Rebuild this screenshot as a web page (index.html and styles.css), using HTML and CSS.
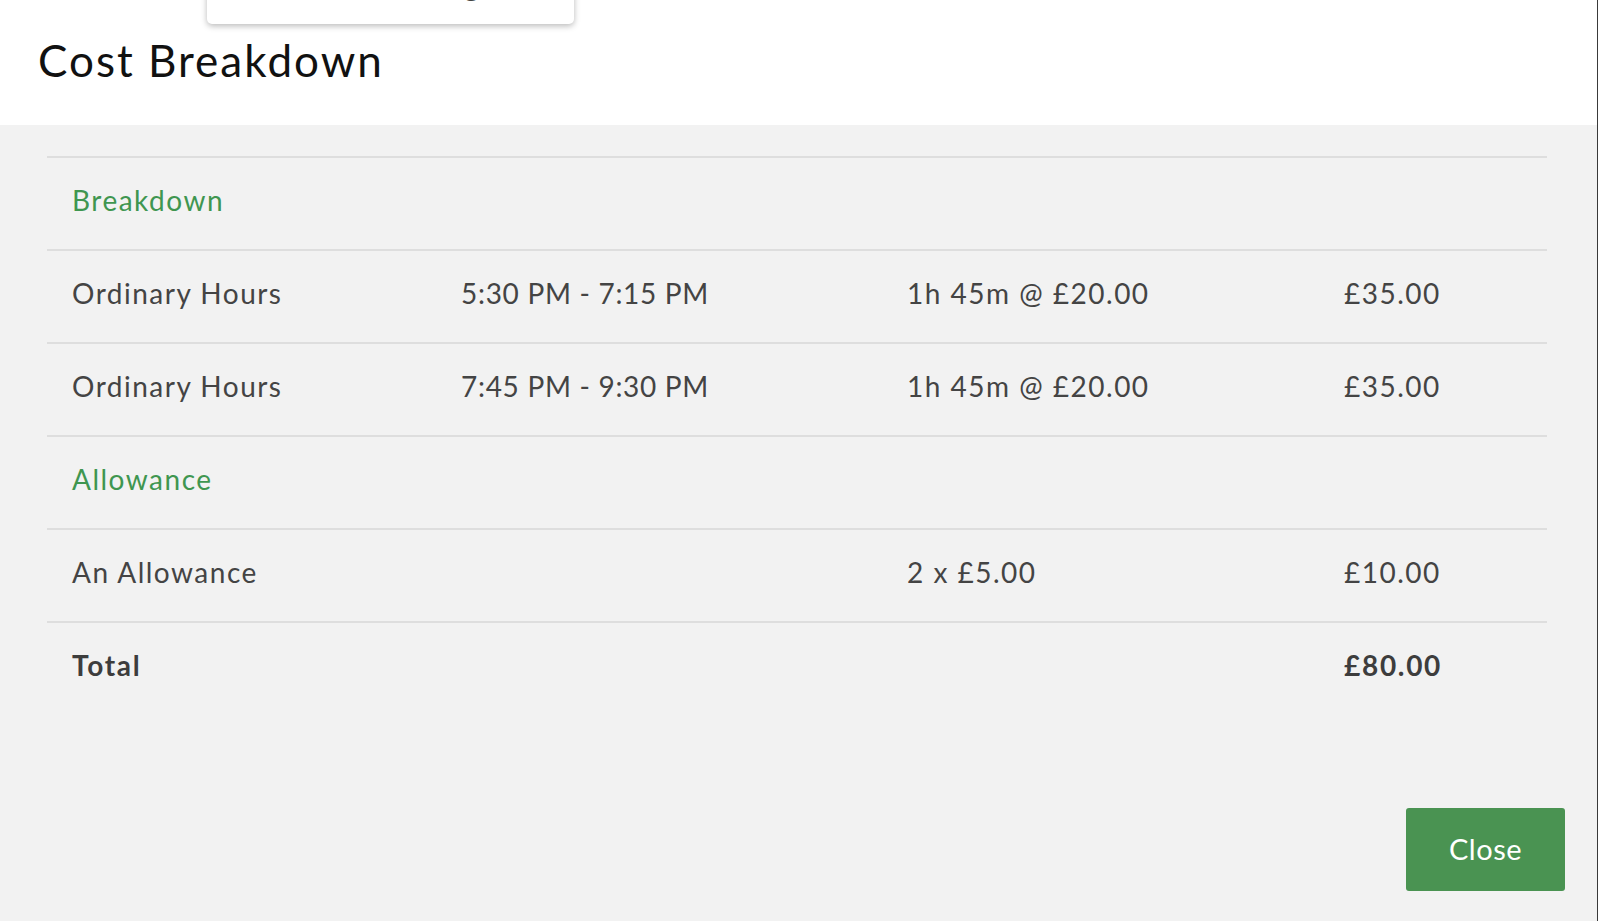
FILE: index.html
```html
<!DOCTYPE html>
<html>
<head>
<meta charset="utf-8">
<link rel="stylesheet" href="styles.css">
</head>
<body>
<div class="page">
  <div class="popup"><span class="popup-text">Calculating</span></div>
  <header class="header">
    <h1 class="title">Cost Breakdown</h1>
  </header>
  <main class="content">
    <div class="table">
      <div class="row section"><div class="cell">Breakdown</div></div>
      <div class="row">
        <div class="cell">Ordinary Hours</div>
        <div class="cell time">5:30 PM - 7:15 PM</div>
        <div class="cell">1h 45m @ £20.00</div>
        <div class="cell">£35.00</div>
      </div>
      <div class="row">
        <div class="cell">Ordinary Hours</div>
        <div class="cell time">7:45 PM - 9:30 PM</div>
        <div class="cell">1h 45m @ £20.00</div>
        <div class="cell">£35.00</div>
      </div>
      <div class="row section"><div class="cell">Allowance</div></div>
      <div class="row">
        <div class="cell">An Allowance</div>
        <div class="cell"></div>
        <div class="cell">2 x £5.00</div>
        <div class="cell">£10.00</div>
      </div>
      <div class="row total">
        <div class="cell">Total</div>
        <div class="cell"></div>
        <div class="cell"></div>
        <div class="cell">£80.00</div>
      </div>
    </div>
    <div class="actions">
      <button class="btn-close">Close</button>
    </div>
  </main>
</div>
</body>
</html>
```

FILE: styles.css
```css
html, body {
  margin: 0;
  padding: 0;
  height: 100%;
  overflow: hidden;
  background: #ffffff;
}
.page {
  position: relative;
  width: 1597px;
  height: 921px;
  border-right: 1px solid #3a3a3a;
  display: flex;
  flex-direction: column;
  font-family: Lato, "Noto Sans", sans-serif;
  color: #444444;
}
.popup {
  position: absolute;
  left: 207px;
  top: -40px;
  width: 367px;
  height: 64px;
  background: #ffffff;
  border-radius: 5px;
  box-shadow: 0 2px 6px rgba(0, 0, 0, 0.28);
  z-index: 2;
  overflow: hidden;
}
.popup-text {
  position: absolute;
  left: 118px;
  top: 10px;
  font-size: 29px;
  line-height: 30px;
  letter-spacing: 1.4px;
  color: #444;
}
.header {
  height: 125px;
  background: #ffffff;
  box-sizing: border-box;
  padding: 33px 0 0 38px;
}
.title {
  margin: 0;
  font-weight: 400;
  font-size: 44px;
  line-height: 54px;
  color: #111111;
  letter-spacing: 2px;
}
.content {
  flex: 1;
  background: #f2f2f2;
  padding: 31px 0 0 47px;
  display: flex;
  flex-direction: column;
}
.table {
  width: 1500px;
}
.row {
  display: grid;
  grid-template-columns: 389px 446px 437px 1fr;
  height: 93px;
  box-sizing: border-box;
  border-top: 2px solid #dedede;
  align-items: center;
  padding-bottom: 7px;
  font-size: 28px;
  letter-spacing: 1.5px;
}
.cell {
  padding-left: 25px;
  white-space: nowrap;
}
.cell.time {
  letter-spacing: 0.7px;
}
.section .cell {
  color: #3f9650;
}
.total .cell {
  font-weight: 700;
  color: #3d3d3d;
  letter-spacing: 1.7px;
}
.actions {
  display: flex;
  justify-content: flex-end;
  padding-right: 32px;
  margin-top: auto;
  padding-bottom: 30px;
}
.btn-close {
  width: 159px;
  height: 83px;
  background: #4a9352;
  color: #ffffff;
  border: none;
  border-radius: 3px;
  font-family: Lato, "Noto Sans", sans-serif;
  font-size: 29px;
  letter-spacing: 0.5px;
  padding: 0 0 2px 0;
}
```
